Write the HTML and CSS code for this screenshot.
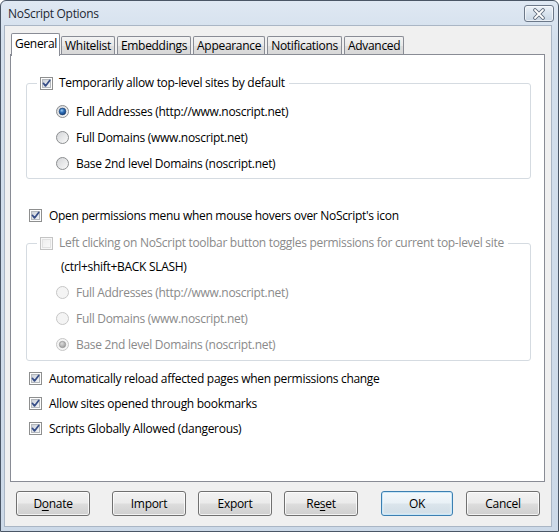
FILE: index.html
```html
<!DOCTYPE html>
<html>
<head>
<meta charset="utf-8">
<link rel="stylesheet" href="styles.css">
</head>
<body>
<svg class="defs" width="0" height="0" aria-hidden="true">
  <defs>
    <linearGradient id="cbfill" x1="0" y1="0" x2="1" y2="1">
      <stop offset="0" stop-color="#c9ced6"/>
      <stop offset="1" stop-color="#f7f8f9"/>
    </linearGradient>
    <linearGradient id="cbfill-d" x1="0" y1="0" x2="1" y2="1">
      <stop offset="0" stop-color="#eeeeee"/>
      <stop offset="1" stop-color="#fafafa"/>
    </linearGradient>
    <linearGradient id="rdfill" x1="0" y1="0" x2="1" y2="1">
      <stop offset="0" stop-color="#d2d4d7"/>
      <stop offset="1" stop-color="#fbfbfb"/>
    </linearGradient>
    <radialGradient id="rddot" cx="0.4" cy="0.35" r="0.7">
      <stop offset="0" stop-color="#9ccdf5"/>
      <stop offset="0.45" stop-color="#2f6fb8"/>
      <stop offset="1" stop-color="#143b73"/>
    </radialGradient>
    <radialGradient id="rddot-d" cx="0.4" cy="0.35" r="0.7">
      <stop offset="0" stop-color="#dcdcdc"/>
      <stop offset="1" stop-color="#9a9a9a"/>
    </radialGradient>
    <symbol id="cb-on" viewBox="0 0 13 13">
      <rect x="0.5" y="0.5" width="12" height="12" fill="#fdfdfd" stroke="#8e8f8f"/>
      <rect x="2.5" y="2.5" width="8" height="8" fill="url(#cbfill)" stroke="#b4b8bd"/>
      <path d="M3.4 6.3 5.5 8.9 9.7 3.4" fill="none" stroke="#354c86" stroke-width="1.7" stroke-linecap="round" stroke-linejoin="round"/>
    </symbol>
    <symbol id="cb-dis" viewBox="0 0 13 13">
      <rect x="0.5" y="0.5" width="12" height="12" fill="#f7f7f7" stroke="#c4c4c4"/>
      <rect x="2.5" y="2.5" width="8" height="8" fill="url(#cbfill-d)" stroke="#e2e2e2"/>
    </symbol>
    <symbol id="rd-on" viewBox="0 0 13 13">
      <circle cx="6.5" cy="6.5" r="6" fill="url(#rdfill)" stroke="#8c8e90"/>
      <circle cx="6.5" cy="6.5" r="3.4" fill="url(#rddot)" stroke="#1d3f6e" stroke-width="0.6"/>
    </symbol>
    <symbol id="rd-off" viewBox="0 0 13 13">
      <circle cx="6.5" cy="6.5" r="6" fill="url(#rdfill)" stroke="#8c8e90"/>
    </symbol>
    <symbol id="rd-dis" viewBox="0 0 13 13">
      <circle cx="6.5" cy="6.5" r="6" fill="#f4f4f4" stroke="#c6c6c6"/>
    </symbol>
    <symbol id="rd-dis-on" viewBox="0 0 13 13">
      <circle cx="6.5" cy="6.5" r="6" fill="#f4f4f4" stroke="#c6c6c6"/>
      <circle cx="6.5" cy="6.5" r="3.2" fill="url(#rddot-d)" stroke="#8f8f8f" stroke-width="0.6"/>
    </symbol>
  </defs>
</svg>

<div class="window">
  <div class="titlebar">
    <span class="title">NoScript Options</span>
    <div class="close">
      <svg width="16" height="12" viewBox="0 0 16 12">
        <path d="M4 2 12 10 M12 2 4 10" stroke="#5b6778" stroke-width="3.6" stroke-linecap="round"/>
        <path d="M4 2 12 10 M12 2 4 10" stroke="#ffffff" stroke-width="1.8" stroke-linecap="round"/>
      </svg>
    </div>
  </div>
  <div class="client">
    <div class="tabs">
      <div class="tab active">General</div>
      <div class="tab">Whitelist</div>
      <div class="tab">Embeddings</div>
      <div class="tab">Appearance</div>
      <div class="tab">Notifications</div>
      <div class="tab">Advanced</div>
    </div>
    <div class="panel">
      <fieldset class="group g1">
        <legend class="legend">
          <svg class="ctl"><use href="#cb-on"/></svg>
          <span>Temporarily allow top-level sites by default</span>
        </legend>
        <div class="opt radio"><svg class="ctl"><use href="#rd-on"/></svg><span>Full Addresses (http://www.noscript.net)</span></div>
        <div class="opt radio"><svg class="ctl"><use href="#rd-off"/></svg><span>Full Domains (www.noscript.net)</span></div>
        <div class="opt radio"><svg class="ctl"><use href="#rd-off"/></svg><span>Base 2nd level Domains (noscript.net)</span></div>
      </fieldset>

      <div class="opt check perm"><svg class="ctl"><use href="#cb-on"/></svg><span>Open permissions menu when mouse hovers over NoScript's icon</span></div>

      <fieldset class="group g2">
        <legend class="legend dis">
          <svg class="ctl"><use href="#cb-dis"/></svg>
          <span>Left clicking on NoScript toolbar button toggles permissions for current top-level site</span>
        </legend>
        <div class="hint">(ctrl+shift+BACK SLASH)</div>
        <div class="opt radio dis"><svg class="ctl"><use href="#rd-dis"/></svg><span>Full Addresses (http://www.noscript.net)</span></div>
        <div class="opt radio dis"><svg class="ctl"><use href="#rd-dis"/></svg><span>Full Domains (www.noscript.net)</span></div>
        <div class="opt radio dis"><svg class="ctl"><use href="#rd-dis-on"/></svg><span>Base 2nd level Domains (noscript.net)</span></div>
      </fieldset>

      <div class="checks">
        <div class="opt check"><svg class="ctl"><use href="#cb-on"/></svg><span>Automatically reload affected pages when permissions change</span></div>
        <div class="opt check"><svg class="ctl"><use href="#cb-on"/></svg><span>Allow sites opened through bookmarks</span></div>
        <div class="opt check"><svg class="ctl"><use href="#cb-on"/></svg><span>Scripts Globally Allowed (dangerous)</span></div>
      </div>
    </div>
    <div class="buttons">
      <button class="btn b-donate">D<u>o</u>nate</button>
      <button class="btn b-import">Import</button>
      <button class="btn b-export">Export</button>
      <button class="btn b-reset">Re<u>s</u>et</button>
      <button class="btn b-ok default">OK</button>
      <button class="btn b-cancel">Cancel</button>
    </div>
  </div>
</div>
</body>
</html>
```

FILE: styles.css
```css
* { box-sizing: border-box; }

html, body {
  margin: 0;
  padding: 0;
  background: #ffffff;
}

body {
  font-family: "Open Sans", "Noto Sans", "Liberation Sans", sans-serif;
  font-size: 12px;
  letter-spacing: -0.3px;
  color: #000;
}

.defs { position: absolute; width: 0; height: 0; overflow: hidden; }

.window {
  width: 559px;
  height: 532px;
  border: 1px solid #4a5666;
  border-radius: 6px 6px 0 0;
  background: linear-gradient(#dfe8f3, #d3dfec 40px, #ccd9e8);
  display: flex;
  flex-direction: column;
}

.titlebar {
  height: 24px;
  display: flex;
  align-items: center;
  justify-content: space-between;
  padding: 0 4px 0 7px;
  flex: none;
}

.title {
  color: #1e2833;
  font-size: 12px;
}

.close {
  width: 30px;
  height: 17px;
  margin-top: 1px;
  border: 1px solid #6c7889;
  border-radius: 3px;
  background: linear-gradient(#edf2f8, #d9e3ee 50%, #cad7e5);
  display: flex;
  align-items: center;
  justify-content: center;
  box-shadow: inset 0 0 0 1px rgba(255,255,255,0.6);
}

.client {
  flex: 1;
  margin: 0 6px 4px 3px;
  border: 1px solid #aab6c5;
  background: #f0f0f0;
  display: flex;
  flex-direction: column;
}

.tabs {
  display: flex;
  align-items: flex-end;
  gap: 2px;
  margin: 7px 0 0 6px;
  height: 21px;
  position: relative;
  z-index: 2;
}

.tab {
  height: 18px;
  padding: 0 3px;
  border: 1px solid #898c95;
  border-bottom: none;
  border-radius: 2px 2px 0 0;
  background: linear-gradient(#f3f3f3, #e9e9e9 50%, #dedede 51%, #d8d8d8);
  display: flex;
  align-items: center;
  line-height: 16px;
  color: #000;
}

.tab.active {
  height: 23px;
  margin-bottom: -2px;
  margin-right: -1px;
  padding: 0 2px 3px 3px;
  background: #ffffff;
}

.panel {
  margin: 0 6px 0 5px;
  height: 428px;
  border: 1px solid #898c95;
  background: #ffffff;
  padding: 0 13px 0 15px;
  position: relative;
  z-index: 1;
}

.group {
  margin: 20px 0 0 0;
  padding: 0 0 2px 29px;
  border: 1px solid #d5dbe1;
  border-radius: 3px;
  min-width: 0;
}

.legend {
  margin-left: -19px;
  padding: 0 4px 0 3px;
  height: 16px;
  line-height: 16px;
  display: flex;
  align-items: center;
  gap: 6px;
}

.legend.dis { color: #8a8a8a; }

.g1 .legend + .opt { margin-top: 7px; }

.ctl {
  width: 13px;
  height: 13px;
  flex: none;
  display: block;
}

.opt {
  display: flex;
  align-items: center;
  white-space: nowrap;
}

.opt.radio {
  height: 26px;
  gap: 7px;
}

.opt.check {
  height: 25px;
  gap: 7px;
  margin-left: 3px;
}

.opt.dis { color: #8a8a8a; }

.perm {
  margin-top: 23px;
  height: 26px !important;
}

.g2 {
  margin-top: 7px;
  padding-bottom: 3px;
}

.hint {
  margin: 3px 0 0 5px;
  height: 25px;
  line-height: 25px;
  color: #000;
}

.checks {
  margin-top: 5px;
}

.buttons {
  display: flex;
  align-items: center;
  margin: 9px 0 0 11px;
}

.btn {
  width: 74px;
  height: 25px;
  font: inherit;
  letter-spacing: inherit;
  color: #000;
  border: 1px solid #707070;
  border-radius: 3px;
  background: linear-gradient(#f2f2f2, #ebebeb 48%, #dddddd 52%, #cfcfcf);
  box-shadow: inset 0 0 0 1px rgba(255,255,255,0.75);
  padding: 0;
  line-height: 21px;
}

.btn u { text-decoration-thickness: 1px; text-underline-offset: 2px; }

.b-import { margin-left: 22px; }
.b-export { margin-left: 12px; }
.b-reset { margin-left: 12px; }
.b-ok { margin-left: 23px; width: 72px; }
.b-cancel { margin-left: 13px; }

.btn.default {
  border-color: #3c7fb1;
  box-shadow: inset 0 0 0 1px #c9e7f8, inset 0 0 2px 1px rgba(255,255,255,0.8);
  background: linear-gradient(#f4f8fb, #e9f1f6 48%, #dbe5ec 52%, #d0dde6);
}
```
